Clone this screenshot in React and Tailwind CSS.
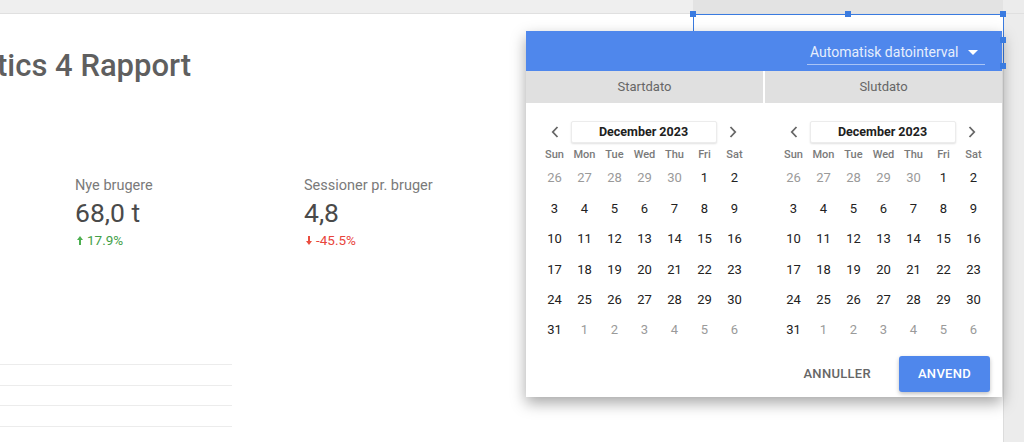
import React from "react";

const font = { fontFamily: "Roboto, 'Liberation Sans', sans-serif" };

const cells = [];
for (let i = 0; i < 42; i++) {
  let d, cur;
  if (i < 5) { d = 26 + i; cur = false; }
  else if (i < 36) { d = i - 4; cur = true; }
  else { d = i - 35; cur = false; }
  cells.push({ d, cur });
}
const weeks = [0, 1, 2, 3, 4, 5].map((w) => cells.slice(w * 7, w * 7 + 7));
const dayNames = ["Sun", "Mon", "Tue", "Wed", "Thu", "Fri", "Sat"];

function Chevron({ left }) {
  return (
    <svg width="8" height="12" viewBox="0 0 8 12" className="block">
      <polyline
        points={left ? "6.5,1 1.8,6 6.5,11" : "1.5,1 6.2,6 1.5,11"}
        fill="none"
        stroke="#666"
        strokeWidth="1.8"
      />
    </svg>
  );
}

function Calendar() {
  return (
    <div className="w-[210px] mx-auto pt-[18px]">
      <div className="flex items-center h-[22px]">
        <div className="w-[30px] flex justify-center"><Chevron left /></div>
        <div className="ml-[1px] w-[146px] h-[22px] flex items-center justify-center bg-white rounded-[2px] border border-[#ececec] shadow-[0_1px_2px_rgba(0,0,0,0.12)] text-[12.5px] font-bold text-[#202020]">
          December 2023
        </div>
        <div className="flex-1 flex justify-center"><Chevron /></div>
      </div>
      <div className="grid grid-cols-7 h-[16px] mt-[4px] items-center">
        {dayNames.map((n) => (
          <div key={n} className="text-center text-[11px] font-medium text-[#7a7a7a]">{n}</div>
        ))}
      </div>
      {weeks.map((w, wi) => (
        <div key={wi} className="grid grid-cols-7 h-[30.4px] items-center">
          {w.map((c, ci) => (
            <div
              key={ci}
              className={
                "text-center text-[13px] " + (c.cur ? "text-[#222222]" : "text-[#9a9a9a]")
              }
            >
              {c.d}
            </div>
          ))}
        </div>
      ))}
    </div>
  );
}

function UpArrow() {
  return (
    <svg width="6" height="9" viewBox="0 0 6 9" className="block">
      <polygon points="3,0 6,4 4,4 4,9 2,9 2,4 0,4" fill="#4caf50" />
    </svg>
  );
}
function DownArrow() {
  return (
    <svg width="6" height="9" viewBox="0 0 6 9" className="block">
      <polygon points="3,9 6,5 4,5 4,0 2,0 2,5 0,5" fill="#ea4d3f" />
    </svg>
  );
}

function Metric({ label, value, delta, up }) {
  return (
    <div className="flex flex-col">
      <div className="h-[18px] leading-[18px] text-[14.5px] text-[#7a7a7a] whitespace-nowrap">{label}</div>
      <div className="mt-[2px] h-[32px] leading-[32px] text-[26.5px] text-[#4a4a4a] whitespace-nowrap">{value}</div>
      <div className={"mt-[3px] h-[16px] flex items-center gap-[4px] text-[13.5px] " + (up ? "text-[#43a047]" : "text-[#e8453c]")}>
        <span className="ml-[2px]">{up ? <UpArrow /> : <DownArrow />}</span>
        <span>{delta}</span>
      </div>
    </div>
  );
}

const handle = "absolute w-[6px] h-[6px] bg-[#3a7be0]";

export default function App() {
  return (
    <div className="relative w-[1024px] h-[442px] overflow-hidden bg-white flex flex-col" style={font}>
      {/* top bar */}
      <div className="h-[14px] flex border-b border-[#e0e0e0]">
        <div className="w-[693px] bg-[#efefef]" />
        <div className="w-[310px] bg-[#e3e3e3]" />
        <div className="flex-1 bg-[#ececec]" />
      </div>
      <div className="flex flex-1">
        {/* canvas */}
        <div className="flex-1 bg-white flex flex-col">
          <div className="mt-[34px] ml-[-3px] h-[36px] leading-[36px] text-[31px] font-medium text-[#5f5f5f] whitespace-nowrap">
            tics 4 Rapport
          </div>
          <div className="mt-[93px] flex pl-[75px]">
            <div className="w-[229px]">
              <Metric label="Nye brugere" value="68,0 t" delta="17.9%" up />
            </div>
            <Metric label="Sessioner pr. bruger" value="4,8" delta="-45.5%" />
          </div>
          <div className="mt-[97px] w-[232px] flex flex-col">
            <div className="h-[20px] border-b border-[#ececec]" />
            <div className="h-[20.7px] border-b border-[#ececec]" />
            <div className="h-[20.7px] border-b border-[#ececec]" />
            <div className="h-[20.7px] border-b border-[#ececec]" />
          </div>
        </div>
        {/* right strip */}
        <div className="w-[21px] bg-[#ececec] border-l border-[#dcdcdc]" />
      </div>

      {/* selection box */}
      <div className="absolute left-[693px] top-[14px] w-[311px] h-[53px] border border-[#3a7be0]" />

      {/* popup */}
      <div className="absolute left-[526px] top-[31px] w-[476px] h-[366px] bg-white flex flex-col shadow-[0_6px_14px_rgba(0,0,0,0.35)]">
        <div className="h-[40px] bg-[#4f87ec] flex justify-end pr-[17px]">
          <div className="mt-[9px] w-[178px] h-[25px] border-b border-[#a9c4f6] flex items-center justify-between pl-[3px] pr-[7px]">
            <span className="text-[14px] text-[#e6eefc]">Automatisk datointerval</span>
            <svg width="10" height="5" viewBox="0 0 10 5" className="block">
              <polygon points="0,0 10,0 5,5" fill="#ffffff" />
            </svg>
          </div>
        </div>
        <div className="h-[32px] flex gap-[2px] bg-white">
          <div className="flex-1 bg-[#e0e0e0] flex items-center justify-center text-[13px] text-[#666666]">Startdato</div>
          <div className="flex-1 bg-[#e0e0e0] flex items-center justify-center text-[13px] text-[#666666]">Slutdato</div>
        </div>
        <div className="flex gap-[2px]">
          <div className="flex-1"><Calendar /></div>
          <div className="flex-1"><Calendar /></div>
        </div>
        <div className="mt-auto flex justify-end items-center pr-[12px] pb-[5px] gap-[12px]">
          <div className="h-[36px] px-[16px] flex items-center text-[13px] font-medium tracking-[0.3px] text-[#666666]">ANNULLER</div>
          <div className="h-[36px] w-[91px] flex items-center justify-center rounded-[3px] bg-[#4f87ec] text-[13px] font-medium tracking-[0.3px] text-white shadow-[0_2px_4px_rgba(0,0,0,0.25)]">ANVEND</div>
        </div>
      </div>

      {/* handles */}
      <div className={handle + " left-[690px] top-[11px]"} />
      <div className={handle + " left-[845px] top-[11px]"} />
      <div className={handle + " left-[1000px] top-[11px]"} />
      <div className={handle + " left-[1000px] top-[37px]"} />
      <div className={handle + " left-[1000px] top-[63px]"} />
    </div>
  );
}
